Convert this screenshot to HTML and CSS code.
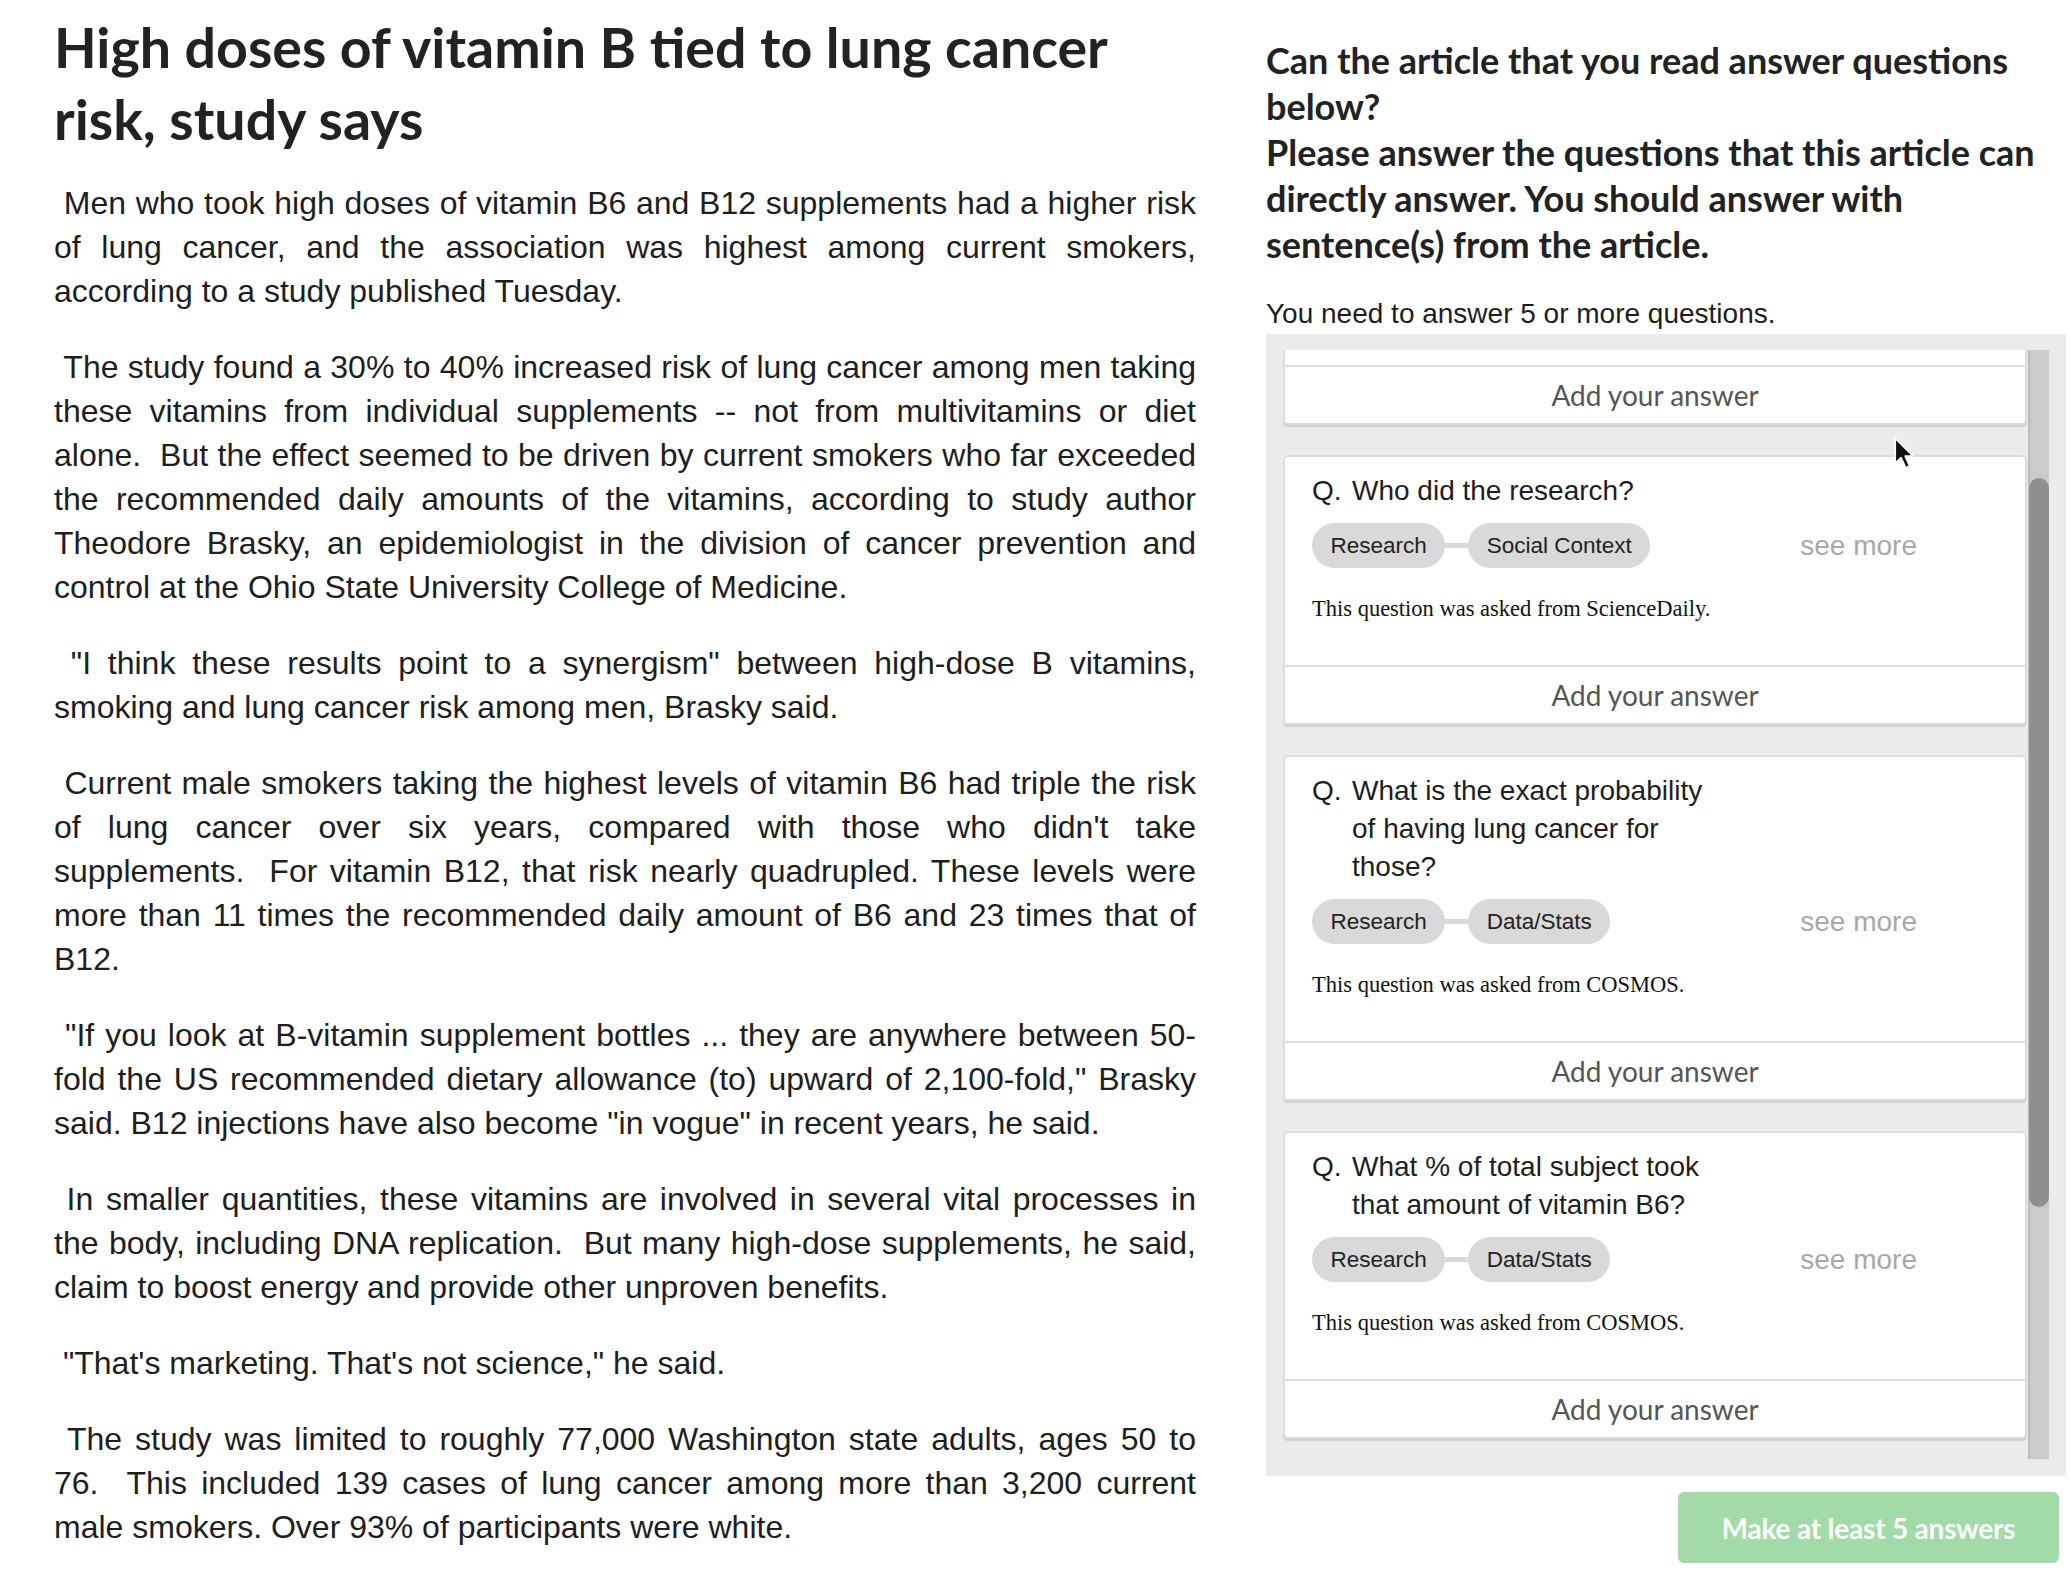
FILE: index.html
```html
<!DOCTYPE html>
<html lang="en">
<head>
<meta charset="utf-8">
<title>Article questions</title>
<link rel="stylesheet" href="styles.css">
</head>
<body>
<div class="page">
  <article class="article">
    <h1 class="title">High doses of vitamin B tied to lung cancer risk, study says</h1>
    <p>&nbsp;Men who took high doses of vitamin B6 and B12 supplements had a higher risk of lung cancer, and the association was highest among current smokers, according to a study published Tuesday.</p>
    <p>&nbsp;The study found a 30% to 40% increased risk of lung cancer among men taking these vitamins from individual supplements -- not from multivitamins or diet alone.&nbsp; But the effect seemed to be driven by current smokers who far exceeded the recommended daily amounts of the vitamins, according to study author Theodore Brasky, an epidemiologist in the division of cancer prevention and control at the Ohio State University College of Medicine.</p>
    <p>&nbsp;"I think these results point to a synergism" between high-dose B vitamins, smoking and lung cancer risk among men, Brasky said.</p>
    <p>&nbsp;Current male smokers taking the highest levels of vitamin B6 had triple the risk of lung cancer over six years, compared with those who didn't take supplements.&nbsp; For vitamin B12, that risk nearly quadrupled. These levels were more than 11 times the recommended daily amount of B6 and 23 times that of B12.</p>
    <p>&nbsp;"If you look at B-vitamin supplement bottles ... they are anywhere between 50-fold the US recommended dietary allowance (to) upward of 2,100-fold," Brasky said. B12 injections have also become "in vogue" in recent years, he said.</p>
    <p>&nbsp;In smaller quantities, these vitamins are involved in several vital processes in the body, including DNA replication.&nbsp; But many high-dose supplements, he said, claim to boost energy and provide other unproven benefits.</p>
    <p>&nbsp;"That's marketing. That's not science," he said.</p>
    <p>&nbsp;The study was limited to roughly 77,000 Washington state adults, ages 50 to 76.&nbsp; This included 139 cases of lung cancer among more than 3,200 current male smokers. Over 93% of participants were white.</p>
  </article>

  <aside class="side">
    <h2 class="prompt">Can the article that you read answer questions below?<br>Please answer the questions that this article can directly answer. You should answer with sentence(s) from the article.</h2>
    <p class="need">You need to answer 5 or more questions.</p>

    <div class="panel">
      <div class="scroller">
        <div class="list">
          <div class="card card-partial">
            <div class="card-body card-body-cut"></div>
            <div class="answer">Add your answer</div>
          </div>

          <div class="card">
            <div class="card-body">
              <div class="question"><span class="q-mark">Q.</span><span class="q-text">Who did the research?</span></div>
              <div class="tags">
                <span class="chip">Research</span><span class="link"></span><span class="chip">Social Context</span>
                <span class="see-more">see more</span>
              </div>
              <p class="source">This question was asked from ScienceDaily.</p>
            </div>
            <div class="answer">Add your answer</div>
          </div>

          <div class="card">
            <div class="card-body">
              <div class="question"><span class="q-mark">Q.</span><span class="q-text">What is the exact probability of having lung cancer for those?</span></div>
              <div class="tags">
                <span class="chip">Research</span><span class="link"></span><span class="chip">Data/Stats</span>
                <span class="see-more">see more</span>
              </div>
              <p class="source">This question was asked from COSMOS.</p>
            </div>
            <div class="answer">Add your answer</div>
          </div>

          <div class="card">
            <div class="card-body">
              <div class="question"><span class="q-mark">Q.</span><span class="q-text">What % of total subject took that amount of vitamin B6?</span></div>
              <div class="tags">
                <span class="chip">Research</span><span class="link"></span><span class="chip">Data/Stats</span>
                <span class="see-more">see more</span>
              </div>
              <p class="source">This question was asked from COSMOS.</p>
            </div>
            <div class="answer">Add your answer</div>
          </div>
        </div>
      </div>
      <div class="scrollbar"><div class="thumb"></div></div>
    </div>

    <div class="actions">
      <button class="submit" type="button">Make at least 5 answers</button>
    </div>
  </aside>
</div>

<svg class="cursor" width="22" height="34" viewBox="0 0 17 26" aria-hidden="true">
  <path d="M1 1 L1 20 L5.5 15.8 L9 23.5 L12 22.2 L8.6 14.6 L14.6 14.6 Z" fill="#111" stroke="#fff" stroke-width="1.2" stroke-linejoin="round"/>
</svg>
</body>
</html>
```

FILE: styles.css
```css
* { box-sizing: border-box; }

html, body {
  margin: 0;
  padding: 0;
  background: #fff;
}

body {
  position: relative;
  width: 2070px;
  height: 1574px;
  overflow: hidden;
  color: #222;
  font-family: "Liberation Sans", Arial, sans-serif;
}

.page {
  display: grid;
  grid-template-columns: 1142px 800px;
  column-gap: 70px;
  padding-left: 54px;
  align-items: start;
}

/* ---------- article ---------- */
.title {
  font-family: Lato, "Open Sans", sans-serif;
  font-weight: 700;
  font-size: 55.5px;
  line-height: 72px;
  color: #222;
  margin: 11px 0 26px;
}

.article p {
  font-size: 32px;
  line-height: 44px;
  text-align: justify;
  margin: 0 0 32px;
  color: #1e1e1e;
}

/* ---------- side ---------- */
.side {
  display: flex;
  flex-direction: column;
}

.prompt {
  font-family: Lato, "Open Sans", sans-serif;
  font-weight: 700;
  font-size: 36px;
  line-height: 46px;
  color: #222;
  margin: 37px 0 29px;
  padding-right: 16px;
}

.need {
  font-size: 28px;
  line-height: 36px;
  margin: 0 0 2px;
  color: #1e1e1e;
}

.panel {
  display: flex;
  background: #ebebeb;
  padding: 16px 17px 17px 17px;
  height: 1142px;
}

.scroller {
  flex: 1;
  overflow: hidden;
}

.list {
  display: flex;
  flex-direction: column;
  gap: 30px;
  margin-top: -17px;
  padding-right: 1px;
}

.scrollbar {
  width: 21px;
  background: #cbcbcb;
  border-left: 2px solid #bdbdbd;
  padding-top: 128px;
}

.thumb {
  height: 729px;
  margin-left: -1px;
  background: #8f8f8f;
  border-radius: 10px;
}

/* ---------- cards ---------- */
.card {
  background: #fff;
  border: 2px solid #dcdcdc;
  border-radius: 5px;
  box-shadow: 0 2px 1px #cfcfcf;
  overflow: hidden;
}

.card-body {
  padding: 15px 27px 42px 27px;
}

.card-body-cut {
  height: 30px;
  padding: 0;
}

.question {
  display: flex;
  font-size: 28px;
  line-height: 38px;
  color: #1e1e1e;
}

.q-mark {
  flex: 0 0 40px;
}

.q-text {
  max-width: 372px;
}

.tags {
  display: flex;
  align-items: center;
  margin-top: 13px;
}

.chip {
  display: inline-flex;
  align-items: center;
  height: 45px;
  padding: 0 18.5px;
  border-radius: 23px;
  background: #d9d9d9;
  font-size: 22.5px;
  color: #222;
}

.link {
  width: 23px;
  height: 5px;
  background: #d9d9d9;
}

.see-more {
  margin-left: auto;
  margin-right: 81px;
  font-size: 28px;
  color: #a8a8a8;
}

.source {
  font-family: "Liberation Serif", "Times New Roman", serif;
  font-size: 22.5px;
  line-height: 28px;
  margin: 27px 0 0;
  color: #111;
}

.answer {
  border-top: 2px solid #dcdcdc;
  height: 58px;
  padding-bottom: 1px;
  display: flex;
  align-items: center;
  justify-content: center;
  font-family: Lato, "Open Sans", sans-serif;
  font-size: 28px;
  color: #555;
}

/* ---------- actions ---------- */
.actions {
  display: flex;
  justify-content: flex-end;
  padding: 16px 7px 0 0;
}

.submit {
  width: 381px;
  height: 71px;
  border: none;
  border-radius: 6px;
  background: #a2dba7;
  color: #fff;
  font-family: Lato, "Open Sans", sans-serif;
  font-weight: 700;
  font-size: 28px;
  letter-spacing: -0.2px;
}

/* mouse pointer overlay */
.cursor {
  position: absolute;
  left: 1894px;
  top: 437px;
}
```
